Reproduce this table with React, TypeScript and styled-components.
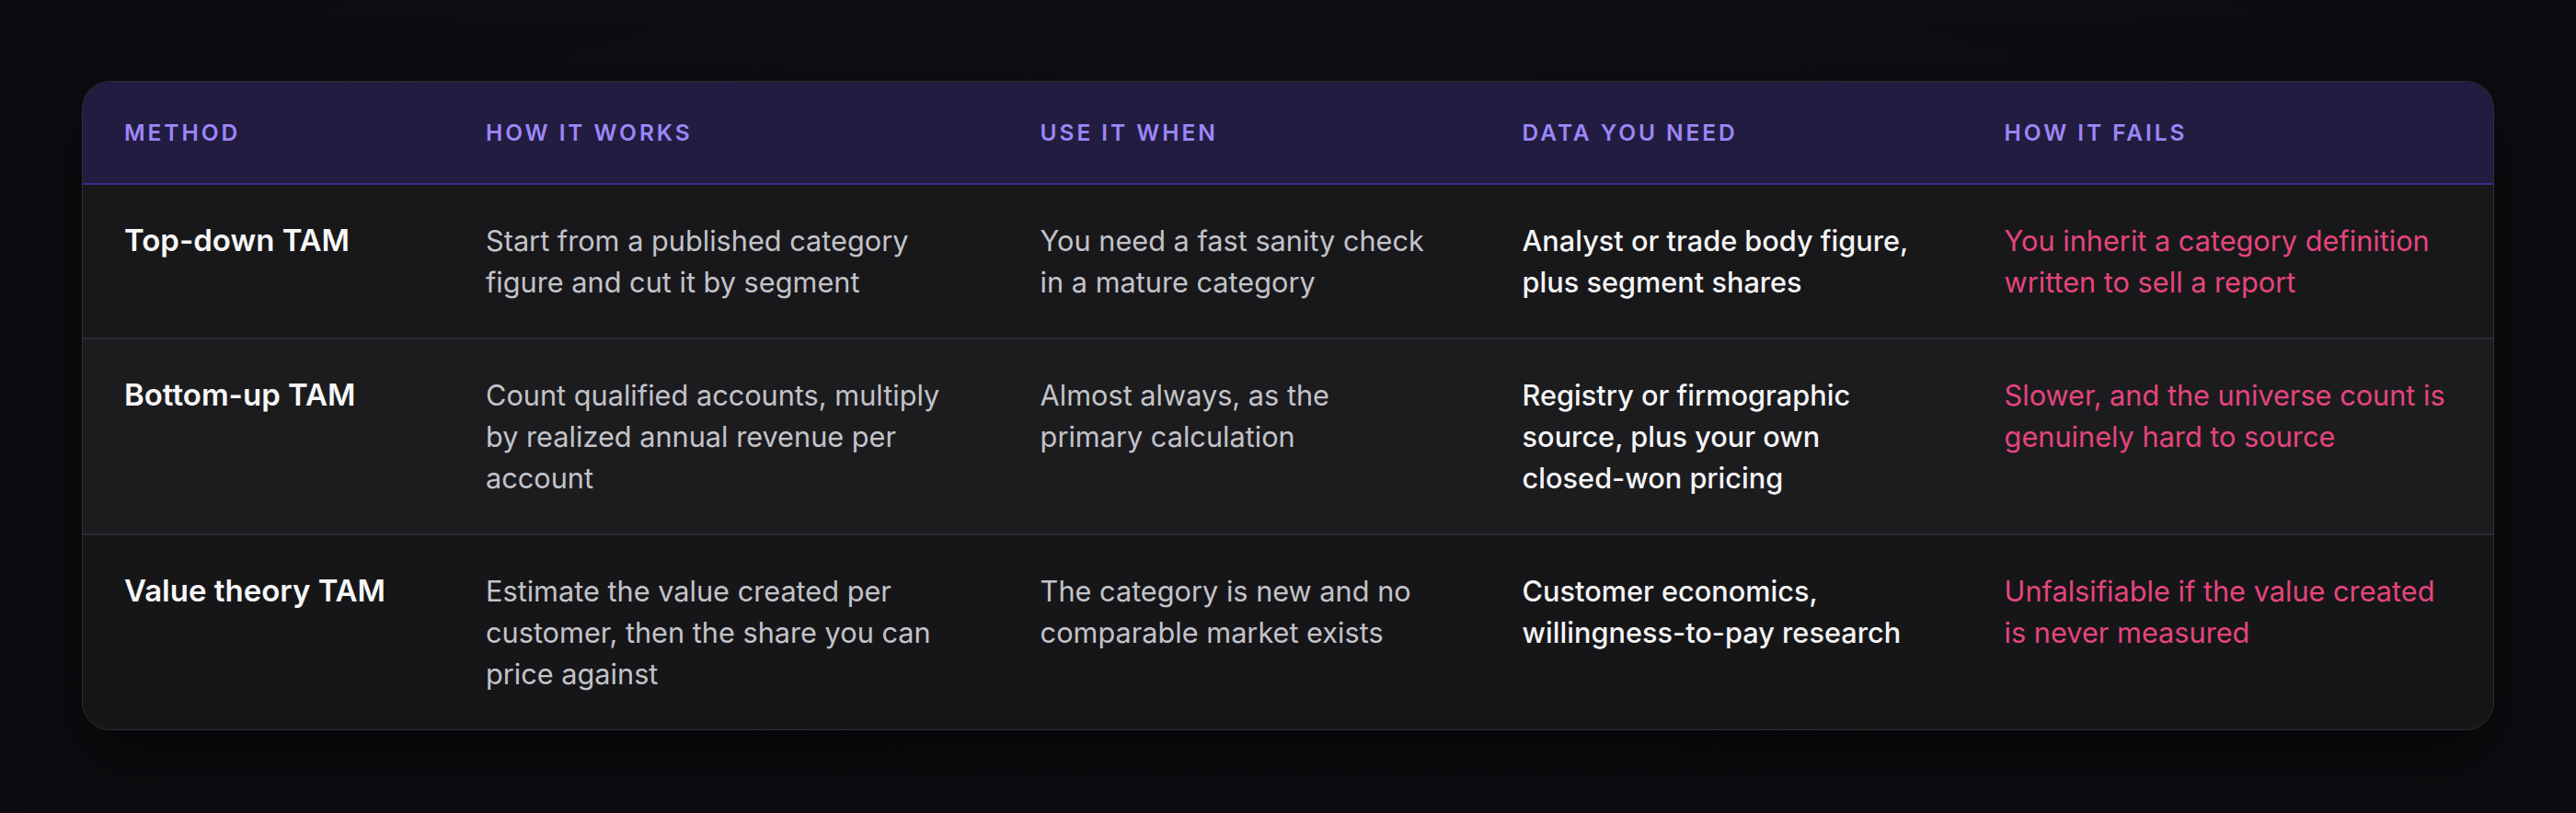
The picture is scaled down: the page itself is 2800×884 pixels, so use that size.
import styled, {createGlobalStyle} from 'styled-components';

type Tone = 'title' | 'muted' | 'strong' | 'danger';

interface MethodRow {
  method: string;
  how: string;
  when: string;
  data: string;
  fails: string;
}

const rows: MethodRow[] = [
  {
    method: 'Top-down TAM',
    how: 'Start from a published category figure and cut it by segment',
    when: 'You need a fast sanity check in a mature category',
    data: 'Analyst or trade body figure, plus segment shares',
    fails: 'You inherit a category definition written to sell a report',
  },
  {
    method: 'Bottom-up TAM',
    how: 'Count qualified accounts, multiply by realized annual revenue per account',
    when: 'Almost always, as the primary calculation',
    data: 'Registry or firmographic source, plus your own closed-won pricing',
    fails: 'Slower, and the universe count is genuinely hard to source',
  },
  {
    method: 'Value theory TAM',
    how: 'Estimate the value created per customer, then the share you can price against',
    when: 'The category is new and no comparable market exists',
    data: 'Customer economics, willingness-to-pay research',
    fails: 'Unfalsifiable if the value created is never measured',
  },
];

const headers = ['Method', 'How it works', 'Use it when', 'Data you need', 'How it fails'];

const rowBackgrounds = ['#18181b', '#1c1c1f', '#161619'];

export default function App() {
  return (
    <>
      <GlobalStyle />
      <Page>
        <Card>
          <HeaderRow>
            {headers.map(h => (
              <HeaderCell key={h}>{h}</HeaderCell>
            ))}
          </HeaderRow>
          {rows.map((row, i) => (
            <BodyRow key={row.method} $bg={rowBackgrounds[i]} $last={i === rows.length - 1}>
              <Cell $tone="title">{row.method}</Cell>
              <Cell $tone="muted">{row.how}</Cell>
              <Cell $tone="muted">{row.when}</Cell>
              <Cell $tone="strong">{row.data}</Cell>
              <Cell $tone="danger">{row.fails}</Cell>
            </BodyRow>
          ))}
        </Card>
      </Page>
    </>
  );
}

const GlobalStyle = createGlobalStyle`
  html, body {
    margin: 0;
    padding: 0;
    background: #0e0e12;
  }
  body {
    font-family: Inter, "Noto Sans", "Liberation Sans", sans-serif;
    -webkit-font-smoothing: antialiased;
  }
  * {
    box-sizing: border-box;
  }
`;

const Page = styled.div`
  min-height: 884px;
  padding: 88px 89px;
  background: radial-gradient(ellipse at 50% 40%, #111116 0%, #0d0d11 70%);
`;

const Card = styled.div`
  border: 1.5px solid #2f2f35;
  border-radius: 30px;
  overflow: hidden;
  background: #18181b;
  box-shadow: 0 30px 80px rgba(0, 0, 0, 0.55);
`;

const columns = '15% 23% 20% 20% 22%';

const HeaderRow = styled.div`
  display: grid;
  grid-template-columns: ${columns};
  background: #221c41;
  border-bottom: 2px solid #3c2b8e;
`;

const HeaderCell = styled.div`
  padding: 37px 45px;
  font-size: 24.5px;
  line-height: 36px;
  font-weight: 600;
  letter-spacing: 0.12em;
  text-transform: uppercase;
  color: #9d86f7;
`;

const BodyRow = styled.div<{$bg: string; $last: boolean}>`
  display: grid;
  grid-template-columns: ${columns};
  background: ${p => p.$bg};
  border-bottom: ${p => (p.$last ? 'none' : '2px solid #2a2a2f')};
`;

const toneStyles: Record<Tone, string> = {
  title: 'color: #f7f7f8; font-weight: 600; font-size: 33px;',
  muted: 'color: #c3c3c8; font-weight: 400;',
  strong: 'color: #f4f4f5; font-weight: 500;',
  danger: 'color: #e5457c; font-weight: 400;',
};

const Cell = styled.div<{$tone: Tone}>`
  padding: 38px 45px;
  font-size: 30.7px;
  line-height: 45px;
  ${p => toneStyles[p.$tone]}
`;
